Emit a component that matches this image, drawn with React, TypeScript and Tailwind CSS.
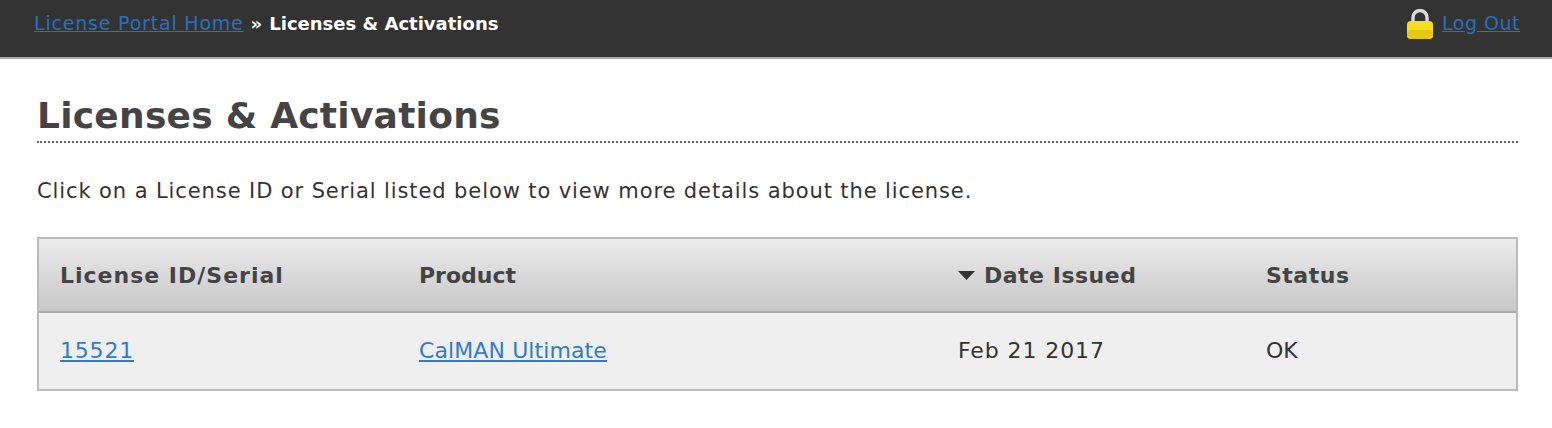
const font = "font-['DejaVu_Sans',Verdana,sans-serif]";

const LockIcon = () => (
  <svg width="26" height="30" viewBox="0 0 26 30" className="shrink-0">
    <path d="M6 14V8.5a7 7 0 0 1 14 0V14" fill="none" stroke="#dcdcdc" strokeWidth="3.4" />
    <rect x="0" y="12" width="26" height="18" rx="4" fill="#f5e01f" />
    <rect x="0" y="21" width="26" height="9" rx="4" fill="#e6c810" />
  </svg>
);

const App = () => {
  return (
    <div className={`${font} h-[428px] w-[1552px] overflow-hidden bg-white text-[#333]`}>
      <header className="flex h-[59px] items-start justify-between border-b-2 border-[#a8a8a8] bg-[#333] pl-[34px] pr-[32px]">
        <div className="mt-[11px] text-[18px] font-bold leading-[24px] text-white">
          <a href="#" className="text-[19px] font-normal tracking-[0.8px] text-[#2a6fc0] underline">License Portal Home</a>
          <span className="tracking-[0.5px]"> » </span>
          <span>Licenses &amp; Activations</span>
        </div>
        <div className="mt-[9px] flex items-start gap-[9px]">
          <LockIcon />
          <a href="#" className="mt-[2px] text-[19px] leading-[24px] tracking-[0.5px] text-[#2a6fc0] underline">Log Out</a>
        </div>
      </header>

      <main className="pl-[37px] pr-[34px] pt-[35px]">
        <h1 className="border-b-2 border-dotted border-[#666] pb-[3px] text-[36px] font-bold leading-[44px] tracking-[0.25px] text-[#444]">
          Licenses &amp; Activations
        </h1>
        <p className="mt-[33px] text-[21px] leading-[30px] tracking-[0.9px]">
          Click on a License ID or Serial listed below to view more details about the license.
        </p>

        <table className="mt-[31px] w-[1481px] table-fixed border-separate border-spacing-0 border-2 border-[#bbb] text-left">
          <thead>
            <tr className="h-[74px] bg-gradient-to-b from-[#ececec] to-[#c6c6c6] text-[22px] font-bold text-[#444]">
              <th className="w-[359px] border-b-2 border-[#aaa] pl-[21px] tracking-[1px]">License ID/Serial</th>
              <th className="w-[539px] border-b-2 border-[#aaa] pl-[21px]">Product</th>
              <th className="w-[308px] border-b-2 border-[#aaa] pl-[21px]">
                <span className="flex items-center gap-[9px] tracking-[0.5px]">
                  <svg width="17" height="9" viewBox="0 0 17 9"><path d="M0 0h17L8.5 9z" fill="#333" /></svg>
                  Date Issued
                </span>
              </th>
              <th className="border-b-2 border-[#aaa] pl-[21px] tracking-[0.5px]">Status</th>
            </tr>
          </thead>
          <tbody>
            <tr className="h-[76px] bg-[#efefef] text-[22px] text-[#333]">
              <td className="pb-[2px] pl-[21px]"><a href="#" className="tracking-[0.8px] text-[#2f7ccc] underline">15521</a></td>
              <td className="pb-[2px] pl-[21px]"><a href="#" className="tracking-[0.1px] text-[#2f7ccc] underline">CalMAN Ultimate</a></td>
              <td className="pb-[2px] pl-[21px] tracking-[0.9px]">Feb 21 2017</td>
              <td className="pb-[2px] pl-[21px]">OK</td>
            </tr>
          </tbody>
        </table>
      </main>
    </div>
  );
};

export default App;
